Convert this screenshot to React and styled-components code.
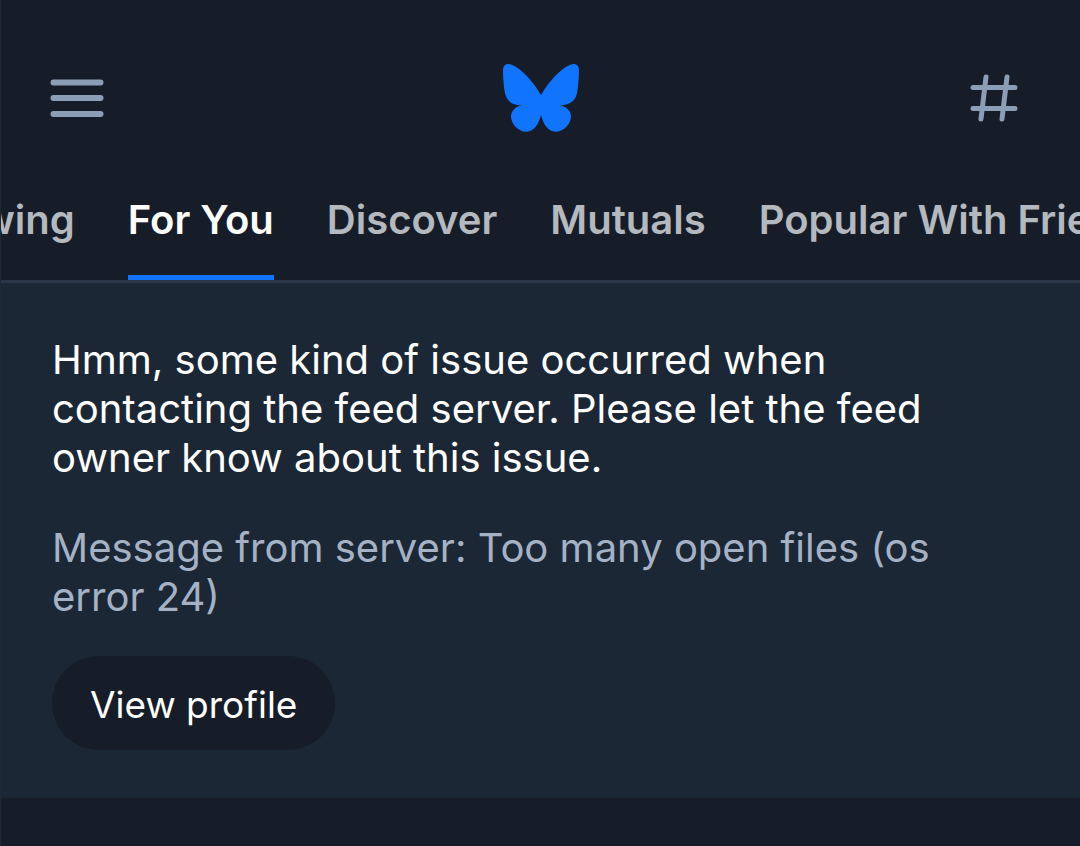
import React, { useLayoutEffect, useRef } from 'react';
import styled, { createGlobalStyle } from 'styled-components';

const FEEDS = ['Following', 'For You', 'Discover', 'Mutuals', 'Popular With Friends'];
const ACTIVE_FEED = 'For You';
const ACTIVE_INSET = 127;

const App = () => {
  const tabBar = useRef(null);
  const activeTab = useRef(null);

  // keep the active feed near the left edge of the tab bar
  useLayoutEffect(() => {
    const bar = tabBar.current.getBoundingClientRect();
    const tab = activeTab.current.getBoundingClientRect();
    tabBar.current.scrollLeft += tab.left - bar.left - ACTIVE_INSET;
  }, []);

  return (
    <Page>
      <GlobalStyle />
      <Header>
        <IconButton aria-label="Open menu">
          <Icon width="54" height="40" viewBox="0 0 54 40" strokeWidth="6">
            <path d="M3.5 4.5h47M3.5 20h47M3.5 36h47" />
          </Icon>
        </IconButton>
        <HomeLink href="#" aria-label="Home">
          <svg width="78" height="70" viewBox="33 41 234 210">
            <path
              fill="#1074fe"
              d="M150 137C128 98 90 56 62 46C46 41 36 47 36 64C36 80 38 106 41 126C44 152 60 168 93 168C74 172 60 184 60 202C61 222 80 247 106 247C130 247 144 222 150 197C156 222 170 247 194 247C220 247 239 222 240 202C240 184 226 172 207 168C240 168 256 152 259 126C262 106 264 80 264 64C264 47 254 41 238 46C210 56 172 98 150 137Z"
            />
          </svg>
        </HomeLink>
        <IconButton aria-label="Feeds">
          <Icon width="48" height="50" viewBox="0 0 48 50" strokeWidth="5">
            <path d="M3 14.5h42M3 35.5h42M16 4L11 46M37 4L32 46" />
          </Icon>
        </IconButton>
      </Header>
      <Tabs ref={tabBar}>
        {FEEDS.map((feed) => (
          <Tab
            key={feed}
            ref={feed === ACTIVE_FEED ? activeTab : null}
            $active={feed === ACTIVE_FEED}
          >
            {feed}
          </Tab>
        ))}
      </Tabs>
      <ErrorPanel>
        <Message>
          Hmm, some kind of issue occurred when contacting the feed server. Please let the feed
          owner know about this issue.
        </Message>
        <Message $muted>Message from server: Too many open files (os error 24)</Message>
        <ProfileButton>View profile</ProfileButton>
      </ErrorPanel>
    </Page>
  );
};

export default App;

const GlobalStyle = createGlobalStyle`
  * {
    box-sizing: border-box;
  }
  body {
    margin: 0;
    background-color: #161d28;
    font-family: Inter, 'Liberation Sans', sans-serif;
  }
  button {
    border: none;
    font-family: inherit;
    cursor: pointer;
  }
`;

const Page = styled.main`
  min-height: 100vh;
  border-left: 1px solid #1e2936;
  overflow: hidden;
`;

const Header = styled.header`
  display: flex;
  align-items: center;
  justify-content: space-between;
  padding: 63px 49px 48px;
`;

const IconButton = styled.button`
  display: flex;
  width: 61px;
  padding: 0;
  background: none;
`;

const HomeLink = styled.a`
  display: flex;
`;

const Icon = styled.svg`
  flex: none;
  fill: none;
  stroke: #8c9db6;
  stroke-linecap: round;
`;

const Tabs = styled.nav`
  display: flex;
  gap: 53px;
  padding: 0 53px;
  border-bottom: 3px solid #2a374a;
  overflow-x: auto;
  scrollbar-width: none;
`;

const Tab = styled.button`
  flex: none;
  padding: 14px 0 30px;
  border-bottom: 5px solid ${({ $active }) => ($active ? '#1074fe' : 'transparent')};
  background: none;
  color: ${({ $active }) => ($active ? '#ffffff' : '#b4b8bf')};
  font-size: 40px;
  font-weight: 600;
  line-height: 50px;
  white-space: nowrap;
`;

const ErrorPanel = styled.section`
  display: flex;
  flex-direction: column;
  align-items: flex-start;
  padding: 52px 104px 48px 51px;
  background-color: #1c2735;
`;

const Message = styled.p`
  margin: 0 0 ${({ $muted }) => ($muted ? 35 : 41)}px;
  color: ${({ $muted }) => ($muted ? '#a5b2c5' : '#ffffff')};
  font-size: 40px;
  line-height: 49px;
`;

const ProfileButton = styled.button`
  padding: 25px 38px 21px;
  border-radius: 48px;
  background-color: #161d28;
  color: #ffffff;
  font-size: 37px;
  line-height: 48px;
`;
